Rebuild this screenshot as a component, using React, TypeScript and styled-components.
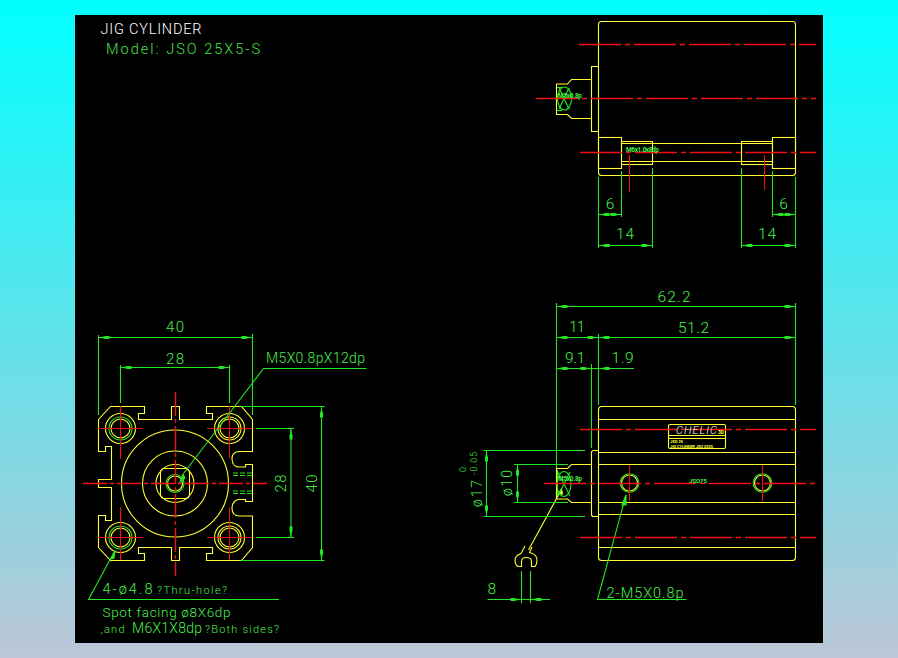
import React from 'react';
import styled, { createGlobalStyle } from 'styled-components';

const GlobalStyle = createGlobalStyle`
  html, body {
    margin: 0;
    padding: 0;
  }
`;

const Page = styled.div`
  box-sizing: border-box;
  width: 898px;
  height: 658px;
  padding: 15px 75px;
  background: linear-gradient(180deg, #00ffff 0%, #bcc6d6 100%);
`;

const Sheet = styled.svg`
  display: block;
  width: 748px;
  height: 628px;
  background: #000;
`;

const YELLOW = '#ffff33';
const GREEN = '#22e822';
const TEXT_GREEN = '#48f048';
const RED = '#f01010';

const Y = styled.g`
  fill: none;
  stroke: ${YELLOW};
  stroke-width: 1.1;
`;

const G = styled.g`
  fill: none;
  stroke: ${GREEN};
  stroke-width: 1.1;
`;

const R = styled.g`
  fill: none;
  stroke: ${RED};
  stroke-width: 1.4;
  stroke-dasharray: 42 4 5 4;
`;

const Solid = styled.g`
  fill: none;
  stroke: ${RED};
  stroke-width: 1.1;
`;

const Label = styled.text<{ $color?: string; $size?: number; $bold?: boolean; $italic?: boolean }>`
  font-family: Roboto, "Liberation Sans", Arial, sans-serif;
  fill: ${(p) => p.$color || TEXT_GREEN};
  stroke: none;
  font-size: ${(p) => p.$size || 14}px;
  font-weight: ${(p) => (p.$bold ? 700 : 300)};
  font-style: ${(p) => (p.$italic ? 'italic' : 'normal')};
`;

// dimension arrow: thin point at the tip, then the fat part the jpeg smears
function ArrowH({ x, y, dir }: { x: number; y: number; dir: 1 | -1 }) {
  return (
    <g fill={GREEN} stroke="none">
      <polygon points={`${x},${y} ${x + dir * 7},${y - 1.2} ${x + dir * 7},${y + 1.2}`} />
      <rect x={dir > 0 ? x + 6 : x - 11} y={y - 1.5} width={5} height={3} />
    </g>
  );
}

function ArrowV({ x, y, dir }: { x: number; y: number; dir: 1 | -1 }) {
  return (
    <g fill={GREEN} stroke="none">
      <polygon points={`${x},${y} ${x - 1.2},${y + dir * 7} ${x + 1.2},${y + dir * 7}`} />
      <rect x={x - 1.5} y={dir > 0 ? y + 6 : y - 11} width={3} height={5} />
    </g>
  );
}

const HOLES: [number, number][] = [
  [120.5, 428.5],
  [229.5, 428.5],
  [120.5, 537.5],
  [229.5, 537.5],
];

const OUTLINE = `M98.5 419.5 L110.5 406.5 H144.5 V413.5 H138.5 V419.5 H171.5 V406.5 H179.5 V419.5 H212.5 V413.5 H206.5 V406.5
  H241.5 L252.5 419.5 V451.5 H239.5 C234 451.5 232 454 232 459 C232 465 236 467 239.5 467 H245.5 V464.5 H252.5 V501.5 H245.5 V499.5 H239.5
  C236 499.5 232 502 232 508 C232 513 234 516 239.5 516 H252.5 V547.5 L241.5 560.5 H206.5 V553.5 H212.5 V547.5 H179.5 V560.5 H171.5 V547.5
  H138.5 V553.5 H144.5 V560.5 H110.5 L98.5 547.5 V515.5 H105.5 V520.5 H111.5 V487.5 H98.5 V479.5 H111.5 V446.5 H105.5 V451.5 H98.5 Z`;

function EndView() {
  return (
    <>
      <Y>
        <path d={OUTLINE} />
        <circle cx={175} cy={483.5} r={53.5} />
        <circle cx={175} cy={483.5} r={32.5} />
        <circle cx={175} cy={483.5} r={19} />
        <rect x={160.5} y={468.5} width={29} height={30} rx={4} />
        <circle cx={175} cy={483.5} r={7.5} />
        {HOLES.map(([x, y]) => (
          <g key={`${x}-${y}`}>
            <circle cx={x} cy={y} r={15} />
            <circle cx={x} cy={y} r={9.5} />
          </g>
        ))}
        <circle cx={229.5} cy={428.5} r={11.5} />
        <circle cx={229.5} cy={537.5} r={11.5} />
      </Y>
      <G>
        <circle cx={120.5} cy={428.5} r={11.5} />
        <circle cx={120.5} cy={537.5} r={11.5} />
        <circle cx={175} cy={483.5} r={9} />
        <path d="M233 473 H252 M233 475.5 H252 M233 491 H252 M233 493.5 H252" strokeDasharray="5 2" />
      </G>
      <R>
        <path d="M83 483.5 H267" strokeDasharray="24 3 4 3" />
        <path d="M175.5 392 V576" strokeDasharray="24 3 4 3" />
      </R>
      <Solid>
        {HOLES.map(([x, y]) => {
          const vert = y < 483 ? -1 : 1;
          return (
            <path
              key={`c-${x}-${y}`}
              d={`M${x - 22.5} ${y} H${x + 22.5} M${x} ${y + vert * 22.5} V${y - vert * 30}`}
            />
          );
        })}
      </Solid>
      <G>
        {/* 40 */}
        <path d="M98.5 335 V415 M252.5 334 V415 M98.5 337.5 H252.5" />
        <ArrowH x={98.5} y={337.5} dir={1} />
        <ArrowH x={252.5} y={337.5} dir={-1} />
        {/* 28 */}
        <path d="M120.5 365 V403 M229.5 365 V403 M120.5 367.5 H229.5" />
        <ArrowH x={120.5} y={367.5} dir={1} />
        <ArrowH x={229.5} y={367.5} dir={-1} />
        {/* right 40 */}
        <path d="M241 406.5 H324.5 M241 560.5 H324.5 M321.5 406.5 V560.5" />
        <ArrowV x={321.5} y={406.5} dir={1} />
        <ArrowV x={321.5} y={560.5} dir={-1} />
        {/* right 28 */}
        <path d="M256 428.5 H294 M256 537.5 H294 M291 428.5 V537.5" />
        <ArrowV x={291} y={428.5} dir={1} />
        <ArrowV x={291} y={537.5} dir={-1} />
        {/* leaders */}
        <path d="M183.5 473.5 L263.5 368.5 H366.5" />
        <path d="M115 550.5 L88.5 599.5 H279" />
        <polygon points="183,474 180,482 185,478" fill={GREEN} />
        <polygon points="115,551 111,559 114,558" fill={GREEN} />
      </G>
      <Label x={175} y={332} textAnchor="middle" textLength={18} $size={15}>40</Label>
      <Label x={175} y={364} textAnchor="middle" textLength={18} $size={15}>28</Label>
      <Label x={266} y={362.5} textLength={99} $size={14}>M5X0.8pX12dp</Label>
      <Label transform="translate(286 483.5) rotate(-90)" textAnchor="middle" textLength={18} $size={15}>28</Label>
      <Label transform="translate(317 483.5) rotate(-90)" textAnchor="middle" textLength={18} $size={15}>40</Label>
      <Label x={102.5} y={594} textLength={50} $size={14.5}>4-ø4.8</Label>
      <Label x={157} y={594} textLength={70} $size={11}>?Thru-hole?</Label>
      <Label x={102.5} y={616.5} textLength={128} $size={13.5}>Spot facing  ø8X6dp</Label>
      <Label x={100.5} y={632.5} textLength={24} $size={11}>,and</Label>
      <Label x={132} y={632.5} textLength={70} $size={14}>M6X1X8dp</Label>
      <Label x={205} y={632.5} textLength={74} $size={11}>?Both sides?</Label>
    </>
  );
}

function TopView() {
  return (
    <>
      <Y>
        <rect x={598.5} y={21.5} width={197} height={154} rx={3} />
        <path d="M598.5 66.5 H591.5 V131.5 H598.5" />
        <path d="M591.5 79.5 H571.5 L567.5 84 H556.5 V114.5 H567.5 L571.5 118.5 H591.5" />
        <rect x={598.5} y={137.5} width={23} height={31} />
        <rect x={621.5} y={141.5} width={31} height={23} />
        <rect x={741.5} y={141.5} width={31} height={23} />
        <rect x={772.5} y={137.5} width={23} height={31} />
        <path d="M621.5 143.5 H772.5 M621.5 161.5 H772.5" />
      </Y>
      <G>
        <ellipse cx={564.5} cy={98.5} rx={7} ry={11.5} />
        <path d="M557 87.5 H562 M557 110.5 H562 M559 88 L569 109 M569 88 L559 109" />
        <path d="M598.5 177 V248 M621.5 171 V217 M652.5 168 V248 M741.5 168 V248 M772.5 171 V217 M795.5 177 V248" />
        <path d="M598.5 214.5 H621.5 M598.5 245.5 H652.5 M772.5 214.5 H795.5 M741.5 245.5 H795.5" />
        <ArrowH x={598.5} y={214.5} dir={1} />
        <ArrowH x={621.5} y={214.5} dir={-1} />
        <ArrowH x={772.5} y={214.5} dir={1} />
        <ArrowH x={795.5} y={214.5} dir={-1} />
        <ArrowH x={598.5} y={245.5} dir={1} />
        <ArrowH x={652.5} y={245.5} dir={-1} />
        <ArrowH x={741.5} y={245.5} dir={1} />
        <ArrowH x={795.5} y={245.5} dir={-1} />
      </G>
      <R>
        <path d="M579 44.5 H816" />
        <path d="M536 98.5 H816" />
        <path d="M580 152.5 H816" />
      </R>
      <Solid>
        <path d="M629.5 155 V192 M764.5 155 V190" />
      </Solid>
      <Label x={558} y={97.5} textLength={24} $size={6.5} $bold>M5x0.8p</Label>
      <Label x={626} y={152} textLength={33} $size={6.5} $bold>M6x1.0x8dp</Label>
      <Label x={610} y={209} textAnchor="middle" $size={15.5}>6</Label>
      <Label x={625} y={239} textAnchor="middle" textLength={18} $size={15.5}>14</Label>
      <Label x={783.5} y={209} textAnchor="middle" $size={15.5}>6</Label>
      <Label x={767} y={239} textAnchor="middle" textLength={18} $size={15.5}>14</Label>
    </>
  );
}

function SideView() {
  return (
    <>
      <Y>
        <rect x={598.5} y={406.5} width={197} height={154} rx={3} />
        <path d="M598.5 419.5 H795.5 M598.5 452.5 H795.5 M598.5 464.5 H795.5 M598.5 502.5 H795.5 M598.5 514.5 H795.5 M598.5 547.5 H795.5" />
        <path d="M598.5 450.5 H593.5 Q591.5 450.5 591.5 452.5 V514.5 Q591.5 516.5 593.5 516.5 H598.5" />
        <path d="M591.5 464.5 H571.5 L567.5 468.5 H556.5 V499 H567.5 L571.5 502.5 H591.5" />
        <circle cx={629.5} cy={483} r={8} />
        <circle cx={762.5} cy={483} r={8} />
        <rect x={668.5} y={424.5} width={57} height={24} rx={1.5} />
        <path d="M668.5 435.5 H725.5 M668.5 438.5 H725.5" />
        <path d="M561.5 489.5 L528.5 550" />
        <path d="M525 546 L521 553.5 C517 555 515 558 515 560.5 C515 564 517 566.5 519 566.5 H521.5 V561.5 C521.5 558.5 523 557.5 526 557.5 C529 557.5 531.5 558.5 531.5 561.5 V566.5 H535 C536.5 565 537 563 537 560 C537 556 534 553.5 529.5 552.5 L532 547" />
        <polygon points="561.5,489 558.5,494 562.5,494" fill={YELLOW} />
      </Y>
      <G>
        <ellipse cx={564} cy={484} rx={7} ry={12.5} />
        <path d="M558 472 L570 496 M570 472 L558 496 M557.5 470 V496" />
        <circle cx={629.5} cy={483} r={9.3} />
        <circle cx={762.5} cy={483} r={9.3} />
        {/* 62.2 */}
        <path d="M556.5 303 V468 M795.5 303 V405 M556.5 306.5 H795.5" />
        <ArrowH x={556.5} y={306.5} dir={1} />
        <ArrowH x={795.5} y={306.5} dir={-1} />
        {/* 11 and 51.2 */}
        <path d="M598.5 334 V405 M556.5 337.5 H795.5" />
        <ArrowH x={556.5} y={337.5} dir={1} />
        <ArrowH x={598.5} y={337.5} dir={-1} />
        <ArrowH x={598.5} y={337.5} dir={1} />
        <ArrowH x={795.5} y={337.5} dir={-1} />
        {/* 9.1 and 1.9 */}
        <path d="M591.5 364 V448 M556.5 368.5 H634" />
        <ArrowH x={556.5} y={368.5} dir={1} />
        <ArrowH x={591.5} y={368.5} dir={-1} />
        <ArrowH x={598.5} y={368.5} dir={1} />
        {/* diameters */}
        <path d="M483.5 450.5 H585 M483.5 516.5 H585 M486.5 450.5 V516.5" />
        <ArrowV x={486.5} y={450.5} dir={1} />
        <ArrowV x={486.5} y={516.5} dir={-1} />
        <path d="M514 464.5 H568 M514 502.5 H568 M517.5 464.5 V502.5" />
        <ArrowV x={517.5} y={464.5} dir={1} />
        <ArrowV x={517.5} y={502.5} dir={-1} />
        {/* 8 */}
        <path d="M521.5 571 V603 M530.5 571 V603 M487.5 599.5 H550" />
        <ArrowH x={521.5} y={599.5} dir={-1} />
        <ArrowH x={530.5} y={599.5} dir={1} />
        {/* leader */}
        <path d="M626 495 L597.5 599.5 H686.5" />
        <polygon points="626,495 622,505 626,505" fill={GREEN} />
      </G>
      <R>
        <path d="M580 429.5 H816" />
        <path d="M544 483.5 H816" />
        <path d="M580 537.5 H816" />
      </R>
      <Solid>
        <path d="M629.5 465 V501 M762.5 465 V501" />
      </Solid>
      <Label x={676} y={434} textLength={41} $size={11} $color="#ffffff" $italic>CHELIC</Label>
      <Label x={718} y={434} textLength={6} $size={5} $color={YELLOW} $bold>3D</Label>
      <Label x={670} y={443} textLength={13} $size={4} $color={YELLOW} $bold>JSO 25</Label>
      <Label x={670} y={447.5} textLength={43} $size={4} $color={YELLOW} $bold>JIG CYLINDER  JSO 25X5</Label>
      <Label x={689} y={483} textLength={18} $size={6} $bold>JSO75</Label>
      <Label x={558} y={481} textLength={24} $size={6.5} $bold>M5x0.8p</Label>
      <Label x={657.5} y={301.5} textLength={33} $size={15.5}>62.2</Label>
      <Label x={678} y={332.5} textLength={31} $size={15.5}>51.2</Label>
      <Label x={569} y={332} textLength={16} $size={15.5}>11</Label>
      <Label x={565} y={362.5} textLength={20} $size={15.5}>9.1</Label>
      <Label x={611.5} y={362.5} textLength={22} $size={15.5}>1.9</Label>
      <Label transform="translate(481.5 507) rotate(-90)" textLength={27} $size={14}>ø17</Label>
      <Label transform="translate(476.5 475) rotate(-90)" textLength={23} $size={9}>-0.05</Label>
      <Label transform="translate(466 472) rotate(-90)" $size={9}>0</Label>
      <Label transform="translate(511.5 496) rotate(-90)" textLength={26} $size={14}>ø10</Label>
      <Label x={487.5} y={593.5} $size={15.5}>8</Label>
      <Label x={606.5} y={597.5} textLength={77} $size={14.5}>2-M5X0.8p</Label>
    </>
  );
}

export default function App() {
  return (
    <>
      <GlobalStyle />
      <Page>
        <Sheet viewBox="75 15 748 628">
          <Label x={100.5} y={33.5} textLength={101} $size={14.5} $color="#ffffff">JIG CYLINDER</Label>
          <Label x={106} y={54} textLength={154} $size={14.5} $color="#48e048">Model: JSO 25X5-S</Label>
          <TopView />
          <EndView />
          <SideView />
        </Sheet>
      </Page>
    </>
  );
}
